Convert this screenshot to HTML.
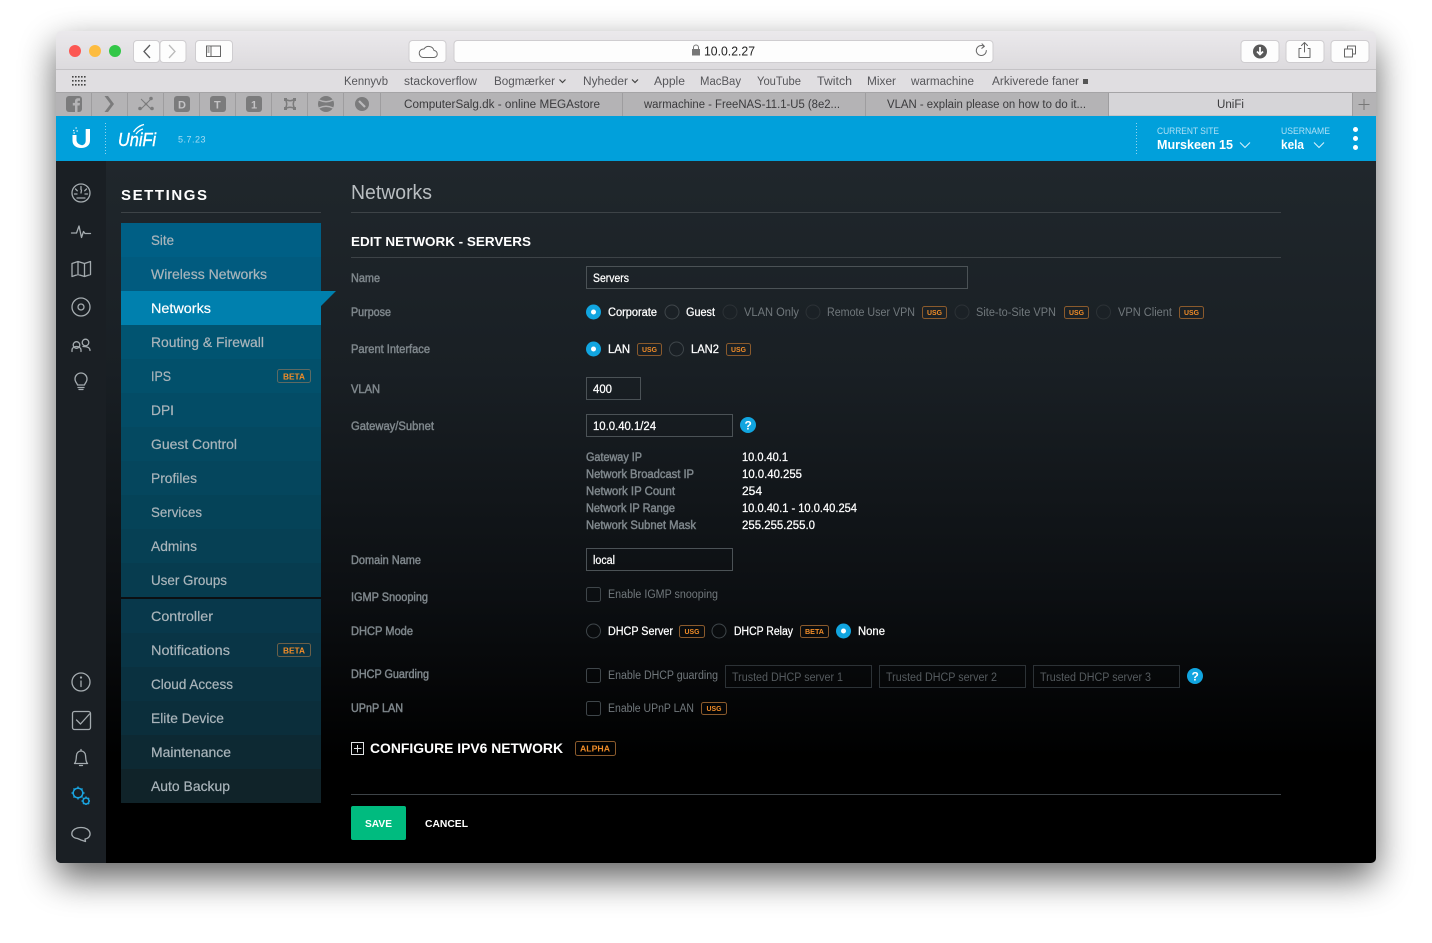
<!DOCTYPE html>
<html><head><meta charset="utf-8"><title>UniFi</title>
<style>
html,body{margin:0;padding:0;width:1432px;height:943px;background:#fff;overflow:hidden}
svg{position:absolute;left:0;top:0;display:block}
text{font-family:"Liberation Sans",sans-serif;white-space:pre}
.bm{font-size:11.5px;fill:#56565a}
.tb{font-size:11.5px;fill:#3a3a3c}
.mn{font-size:14px;fill:#aab5bb;stroke:#aab5bb;stroke-width:.2}
.lb{font-size:11.5px;fill:#7f878c;stroke:#7f878c;stroke-width:.45}
.wt{font-size:11.5px;fill:#fff;stroke:#fff;stroke-width:.25}
.dm{font-size:11.5px;fill:#71787c}
.ph{font-size:11.5px;fill:#555b5f}
.bd{font-size:7.5px;font-weight:bold;fill:#f08c28}
.usg{fill:none;stroke:#8a5a2c;stroke-width:1}
.inp{fill:none;stroke:#4b5256;stroke-width:1}
.ic{fill:none;stroke:#a4abaf;stroke-width:1.3;stroke-linecap:round;stroke-linejoin:round}
.rd{fill:none;stroke:#3f464a;stroke-width:1}
.rdd{fill:none;stroke:#2c3236;stroke-width:1}
.tbi{fill:none;stroke:#666;stroke-width:1;stroke-linecap:round;stroke-linejoin:round}
.btn{fill:#fdfdfd;stroke:#cfcdd0;stroke-width:1}
.ti{fill:#7b7b7c}
</style></head>
<body>
<svg width="1432" height="943" viewBox="0 0 1432 943" xmlns="http://www.w3.org/2000/svg">
<defs>
<filter id="sh" x="-10%" y="-10%" width="120%" height="125%"><feGaussianBlur stdDeviation="18"/></filter>
<linearGradient id="chrome" x1="0" y1="0" x2="0" y2="1"><stop offset="0" stop-color="#ebe9ec"/><stop offset="1" stop-color="#dcdadd"/></linearGradient>
<linearGradient id="bg" x1="0" y1="0" x2="0" y2="1"><stop offset="0" stop-color="#20272c"/><stop offset=".3" stop-color="#191f24"/><stop offset=".62" stop-color="#0c0f12"/><stop offset=".85" stop-color="#000"/><stop offset="1" stop-color="#000"/></linearGradient>
<clipPath id="win"><rect x="56" y="31" width="1320" height="832" rx="5"/></clipPath>
</defs>

<rect x="56" y="46" width="1320" height="832" rx="6" fill="#000" opacity=".62" filter="url(#sh)"/>
<g clip-path="url(#win)">
<rect x="56" y="31" width="1320" height="39" fill="url(#chrome)"/>
<rect x="56" y="69" width="1320" height="1" fill="#c4c2c5"/>
<rect x="56" y="70" width="1320" height="22" fill="#e0dee1"/>
<rect x="56" y="92" width="1320" height="24" fill="#b4b3b5"/>
<rect x="56" y="92" width="1320" height="1" fill="#a5a4a6"/>
<rect x="1109" y="93" width="243" height="22.5" fill="#d6d5d8"/>
<rect x="56" y="116" width="1320" height="45" fill="#01a0db"/>
<rect x="56" y="161" width="1320" height="702" fill="url(#bg)"/>
<rect x="56" y="161" width="50" height="702" fill="#1a1f24"/>
</g>

<!-- traffic lights -->
<circle cx="75" cy="51" r="6" fill="#fc5753"/><circle cx="95" cy="51" r="6" fill="#fdbc40"/><circle cx="115" cy="51" r="6" fill="#33c748"/>
<!-- toolbar buttons -->
<rect class="btn" x="133.5" y="40.5" width="26" height="22" rx="3.5"/><rect class="btn" x="160" y="40.5" width="26" height="22" rx="3.5"/>
<path d="M150 45l-6 6.500 6 6.500" fill="none" stroke="#5b5b5d" stroke-width="1.300"/>
<path d="M169 45l6 6.500-6 6.500" fill="none" stroke="#bbb" stroke-width="1.300"/>
<rect class="btn" x="195.500" y="40.500" width="37" height="22" rx="3.500"/>
<rect x="206.500" y="46" width="14" height="10.500" fill="none" stroke="#666"/><path d="M211 46v10.500M207.500 48h2M207.500 50h2M207.500 52h2" stroke="#666" stroke-width="1" fill="none"/>
<rect class="btn" x="409" y="40.500" width="37" height="22" rx="3.500"/>
<path d="M423 57.500h10.500a3.500 3.500 0 0 0 .5-7 5.500 5.500 0 0 0-10-1.500 4 4 0 0 0-1 8.500z" class="tbi"/>
<rect class="btn" x="454" y="40.500" width="539" height="22" rx="3.500"/>
<path d="M693.500 49v-1.500a2.500 2.500 0 0 1 5 0v1.500" fill="none" stroke="#777" stroke-width="1"/><rect x="692" y="49" width="8" height="6.500" fill="#777"/>
<text x="704" y="55.500" font-size="12.500" fill="#222" textLength="51" lengthAdjust="spacingAndGlyphs">10.0.2.27</text>
<path d="M986.300 50.500a5 5 0 1 1-2.300-4.200" class="tbi"/><path d="M982 43.800l2.400 2.500-2.600 2" class="tbi"/>
<rect class="btn" x="1241" y="40.500" width="38" height="22" rx="3.500"/>
<circle cx="1260" cy="51.500" r="7" fill="#585858"/><path d="M1260 47v6M1257 51.500l3 3 3-3" fill="none" stroke="#fff" stroke-width="1.800"/>
<rect class="btn" x="1286" y="40.500" width="38" height="22" rx="3.500"/>
<path d="M1301 48.500h-2v9h11v-9h-2M1304.500 52v-9M1301.500 45.500l3-3 3 3" class="tbi"/>
<rect class="btn" x="1331" y="40.500" width="38" height="22" rx="3.500"/>
<rect x="1344.500" y="49" width="8" height="8" class="tbi"/><path d="M1347.500 49v-3h8v8h-3" class="tbi"/>

<!-- bookmarks -->
<g fill="#444"><rect x="72" y="76" width="1.600" height="1.600"/><rect x="75" y="76" width="1.600" height="1.600"/><rect x="78" y="76" width="1.600" height="1.600"/><rect x="81" y="76" width="1.600" height="1.600"/><rect x="84" y="76" width="1.600" height="1.600"/>
<rect x="72" y="80" width="1.600" height="1.600"/><rect x="75" y="80" width="1.600" height="1.600"/><rect x="78" y="80" width="1.600" height="1.600"/><rect x="81" y="80" width="1.600" height="1.600"/><rect x="84" y="80" width="1.600" height="1.600"/>
<rect x="72" y="84" width="1.600" height="1.600"/><rect x="75" y="84" width="1.600" height="1.600"/><rect x="78" y="84" width="1.600" height="1.600"/><rect x="81" y="84" width="1.600" height="1.600"/><rect x="84" y="84" width="1.600" height="1.600"/></g>
<text class="bm" x="344" y="85" textLength="44" lengthAdjust="spacingAndGlyphs">Kennyvb</text>
<text class="bm" x="404" y="85" textLength="73" lengthAdjust="spacingAndGlyphs">stackoverflow</text>
<text class="bm" x="494" y="85" textLength="61" lengthAdjust="spacingAndGlyphs">Bogmærker</text>
<path d="M559.500 79.500l3 3 3-3" fill="none" stroke="#444" stroke-width="1.200"/>
<text class="bm" x="583" y="85" textLength="45" lengthAdjust="spacingAndGlyphs">Nyheder</text>
<path d="M632 79.500l3 3 3-3" fill="none" stroke="#444" stroke-width="1.200"/>
<text class="bm" x="654" y="85" textLength="31" lengthAdjust="spacingAndGlyphs">Apple</text>
<text class="bm" x="700" y="85" textLength="41" lengthAdjust="spacingAndGlyphs">MacBay</text>
<text class="bm" x="757" y="85" textLength="44" lengthAdjust="spacingAndGlyphs">YouTube</text>
<text class="bm" x="817" y="85" textLength="35" lengthAdjust="spacingAndGlyphs">Twitch</text>
<text class="bm" x="867" y="85" textLength="29" lengthAdjust="spacingAndGlyphs">Mixer</text>
<text class="bm" x="911" y="85" textLength="63" lengthAdjust="spacingAndGlyphs">warmachine</text>
<text class="bm" x="992" y="85" textLength="87" lengthAdjust="spacingAndGlyphs">Arkiverede faner</text>
<rect x="1083" y="79" width="5" height="5" fill="#555"/>

<!-- tabs -->
<path d="M91.500 93v23M127.500 93v23M163.500 93v23M199.500 93v23M235.500 93v23M271.500 93v23M307.500 93v23M343.500 93v23M380.500 93v23M622.500 93v23M865.500 93v23M1108.500 93v23M1352.500 93v23" stroke="#9e9d9f" fill="none"/>
<rect class="ti" x="66" y="96" width="16" height="16" rx="3"/><path d="M75 112v-6.500h-2.200v-2.600h2.200v-1.700c0-2 1.300-2.900 3-2.900h2v2.500h-1.300c-.8 0-1.200.3-1.200 1.100v1h2.500l-.4 2.600h-2.100v6.500z" fill="#b4b3b5"/>
<path d="M104.500 96l6 8-6 8h3.500l6-8-6-8z" fill="#7b7b7c"/>
<path d="M141 99l5 5 5-5M146 104l-5 5M146 104l5 5" stroke="#7b7b7c" fill="none"/><g fill="#7b7b7c"><circle cx="140" cy="108.500" r="1.800"/><circle cx="152" cy="108.500" r="1.800"/><circle cx="151" cy="98.500" r="1.800"/><circle cx="146" cy="104" r="1.300"/></g>
<rect class="ti" x="174" y="96" width="16" height="16" rx="3"/><text x="178" y="108.500" font-size="11" font-weight="bold" fill="#c4c3c5">D</text>
<rect class="ti" x="210" y="96" width="16" height="16" rx="3"/><text x="214" y="108.500" font-size="11" font-weight="bold" fill="#c4c3c5">T</text>
<rect class="ti" x="246" y="96" width="16" height="16" rx="3"/><text x="251" y="108.500" font-size="11" font-weight="bold" fill="#c4c3c5">1</text>
<path d="M285 99q5 3.500 10 0q-3.500 5 0 10q-5-3.500-10 0q3.500-5 0-10z" fill="none" stroke="#7b7b7c" stroke-width="1.500"/><g fill="#7b7b7c"><rect x="284" y="98" width="3" height="3"/><rect x="293" y="98" width="3" height="3"/><rect x="284" y="107" width="3" height="3"/><rect x="293" y="107" width="3" height="3"/></g>
<circle cx="326" cy="104" r="8" fill="#7b7b7c"/><path d="M319 100q7 3.500 14 0M319 108q7-3.500 14 0" stroke="#b4b3b5" stroke-width="1.500" fill="none"/>
<circle cx="362" cy="104" r="7" fill="#7b7b7c"/><path d="M359 101l6 6" stroke="#bcbbbd" stroke-width="2.200"/>
<text class="tb" x="404" y="108" textLength="196" lengthAdjust="spacingAndGlyphs">ComputerSalg.dk - online MEGAstore</text>
<text class="tb" x="644" y="108" textLength="196" lengthAdjust="spacingAndGlyphs">warmachine - FreeNAS-11.1-U5 (8e2...</text>
<text class="tb" x="887" y="108" textLength="199" lengthAdjust="spacingAndGlyphs">VLAN - explain please on how to do it...</text>
<text class="tb" x="1217" y="108" textLength="27" lengthAdjust="spacingAndGlyphs">UniFi</text>
<path d="M1364 99v11M1358.500 104.500h11" stroke="#777" fill="none"/>

<!-- blue header -->
<path d="M72.500 135v5.500c0 4.800 3.500 7.500 8.700 7.500s8.800-2.700 8.800-7.500V129h-4.300v11.500c0 2.600-1.300 4.300-3.500 4.700-3-.4-5.200-2-5.700-4.700v-5.500z" fill="#fff"/>
<path d="M73 130.500h1.300M75.500 128h1.200M73.500 133h1.300M76.500 131h1.300" stroke="#fff" stroke-width="1.300" fill="none"/>
<path d="M105.500 123v31" stroke="#8fd3ee" stroke-width="1" stroke-dasharray="1 2" fill="none"/>
<text x="118" y="146" font-size="18.500" font-style="italic" fill="#fff" stroke="#fff" stroke-width=".4" textLength="38" lengthAdjust="spacingAndGlyphs">UniFi</text>
<path d="M133.500 132q4-6 10.500-7.500M136 134q3-4 7-5" stroke="#fff" stroke-width="1.300" fill="none"/>
<text x="178" y="142.500" font-size="9.500" letter-spacing=".5" fill="#a8dcf3" textLength="28" lengthAdjust="spacingAndGlyphs">5.7.23</text>
<path d="M1136.500 123v31" stroke="#8fd3ee" stroke-width="1" stroke-dasharray="1 2" fill="none"/>
<text x="1157" y="134" font-size="9.500" fill="#b0e0f5" textLength="62" lengthAdjust="spacingAndGlyphs">CURRENT SITE</text>
<text x="1157" y="149" font-size="12.500" font-weight="bold" fill="#fff" textLength="76" lengthAdjust="spacingAndGlyphs">Murskeen 15</text>
<path d="M1240 142.500l5 5 5-5" fill="none" stroke="#d5f0fb" stroke-width="1.100"/>
<text x="1281" y="134" font-size="9.500" fill="#b0e0f5" textLength="49" lengthAdjust="spacingAndGlyphs">USERNAME</text>
<text x="1281" y="149" font-size="12.500" font-weight="bold" fill="#fff" textLength="23" lengthAdjust="spacingAndGlyphs">kela</text>
<path d="M1314 142.500l5 5 5-5" fill="none" stroke="#d5f0fb" stroke-width="1.100"/>
<circle cx="1355.500" cy="129.500" r="2.500" fill="#fff"/><circle cx="1355.500" cy="138.500" r="2.500" fill="#fff"/><circle cx="1355.500" cy="147.500" r="2.500" fill="#fff"/>

<!-- left rail icons -->
<g class="ic">
<circle cx="81" cy="193" r="9"/><path d="M81 186.500v3M75.500 189l1.800 1.800M86.500 189l-1.800 1.800M74.500 194h2.500M85 194h2.500M81 193l.5-3M77 198h8"/>
<path d="M71.500 233h5l2.500-7 2.500 11.500 2-6 1.500 2h5.500"/>
<path d="M72 263.500l6-2 6.500 2 6-2v13l-6 2-6.500-2-6 2zM78 261.500v13M84.500 263.500v13"/>
<circle cx="81" cy="307" r="9"/><circle cx="81" cy="307" r="3"/>
<circle cx="76.500" cy="345" r="3.300"/><circle cx="85.500" cy="342.500" r="3.300"/><path d="M72 351.500v-1.500a4.500 3.500 0 0 1 9 0v1.500M83 346.500c4 0 7 1 7 4"/>
<path d="M77.500 385c-.5-2-2.500-3-2.500-6a6 6 0 0 1 12 0c0 3-2 4-2.500 6zM78 387.500h6M79 389.500h4"/>
<circle cx="81" cy="682" r="9"/><path d="M81 681v5.500"/><circle cx="81" cy="677.500" r=".5"/>
<rect x="72.500" y="711.500" width="18" height="18" rx="2"/><path d="M76.500 720l4 4 9-10"/>
<path d="M74.500 763.500c2-2 1.500-4.500 2-8a4.500 4.500 0 0 1 9 0c.5 3.500 0 6 2 8zM79.500 765.500h3M81 749.500v1.500"/>
<path d="M81 840l-3.500-1.500c-9-1-7-11 3.500-11s12 10 4 11.500l.5 2.500z"/>
</g>
<g fill="none" stroke="#19a4e0" stroke-width="1.500">
<circle cx="78" cy="793" r="4.800"/><circle cx="86" cy="801" r="3"/>
<path d="M78 786.500v1.500M78 798v1.500M71.500 793h1.500M83 793h1.500M73.500 788.500l1 1M81.500 796.500l1 1M73.500 797.500l1-1M81.500 789.500l1-1M86 796.500v1M86 804v1M81.500 801h1M89 801h1M83 798l.8.8M88.300 803.300l.8.800M83 804l.8-.8M88.300 798.700l.8-.8" stroke-width="1.400"/>
</g>

<!-- settings menu -->
<text x="121" y="200" font-size="15" font-weight="bold" fill="#fff" textLength="86" lengthAdjust="spacing">SETTINGS</text>
<rect x="121" y="212" width="200" height="1" fill="#3d4347"/>
<rect x="121" y="223" width="200" height="34" fill="#005f85"/>
<rect x="121" y="257" width="200" height="34" fill="#015b7f"/>
<rect x="121" y="291" width="200" height="34" fill="#0080ae"/>
<path d="M321 291h15l-15 15z" fill="#0080ae"/>
<rect x="121" y="325" width="200" height="34" fill="#015471"/>
<rect x="121" y="359" width="200" height="34" fill="#02506b"/>
<rect x="121" y="393" width="200" height="34" fill="#034c66"/>
<rect x="121" y="427" width="200" height="34" fill="#044961"/>
<rect x="121" y="461" width="200" height="34" fill="#05465d"/>
<rect x="121" y="495" width="200" height="34" fill="#054358"/>
<rect x="121" y="529" width="200" height="34" fill="#064054"/>
<rect x="121" y="563" width="200" height="34" fill="#073c4f"/>
<rect x="121" y="599" width="200" height="34" fill="#08384b"/>
<rect x="121" y="633" width="200" height="34" fill="#093546"/>
<rect x="121" y="667" width="200" height="34" fill="#0a3140"/>
<rect x="121" y="701" width="200" height="34" fill="#0b2e3b"/>
<rect x="121" y="735" width="200" height="34" fill="#0d2933"/>
<rect x="121" y="769" width="200" height="34" fill="#102329"/>
<text class="mn" x="151" y="245" textLength="23" lengthAdjust="spacingAndGlyphs">Site</text>
<text class="mn" x="151" y="279" textLength="116" lengthAdjust="spacingAndGlyphs">Wireless Networks</text>
<text class="mn" x="151" y="313" style="fill:#fff;stroke:#fff" textLength="60" lengthAdjust="spacingAndGlyphs">Networks</text>
<text class="mn" x="151" y="347" textLength="113" lengthAdjust="spacingAndGlyphs">Routing &amp; Firewall</text>
<text class="mn" x="151" y="381" textLength="20" lengthAdjust="spacingAndGlyphs">IPS</text>
<text class="mn" x="151" y="415" textLength="23" lengthAdjust="spacingAndGlyphs">DPI</text>
<text class="mn" x="151" y="449" textLength="86" lengthAdjust="spacingAndGlyphs">Guest Control</text>
<text class="mn" x="151" y="483" textLength="46" lengthAdjust="spacingAndGlyphs">Profiles</text>
<text class="mn" x="151" y="517" textLength="51" lengthAdjust="spacingAndGlyphs">Services</text>
<text class="mn" x="151" y="551" textLength="46" lengthAdjust="spacingAndGlyphs">Admins</text>
<text class="mn" x="151" y="585" textLength="76" lengthAdjust="spacingAndGlyphs">User Groups</text>
<text class="mn" x="151" y="621" textLength="62" lengthAdjust="spacingAndGlyphs">Controller</text>
<text class="mn" x="151" y="655" textLength="79" lengthAdjust="spacingAndGlyphs">Notifications</text>
<text class="mn" x="151" y="689" textLength="82" lengthAdjust="spacingAndGlyphs">Cloud Access</text>
<text class="mn" x="151" y="723" textLength="73" lengthAdjust="spacingAndGlyphs">Elite Device</text>
<text class="mn" x="151" y="757" textLength="80" lengthAdjust="spacingAndGlyphs">Maintenance</text>
<text class="mn" x="151" y="791" textLength="79" lengthAdjust="spacingAndGlyphs">Auto Backup</text>
<rect x="277.500" y="369.500" width="33" height="13" rx="2" fill="none" stroke="#5e6a63"/>
<text x="283" y="379.500" font-size="8.500" font-weight="bold" fill="#f08c28" textLength="22" lengthAdjust="spacingAndGlyphs">BETA</text>
<rect x="277.500" y="643.500" width="33" height="13" rx="2" fill="none" stroke="#6b5f48"/>
<text x="283" y="653.500" font-size="8.500" font-weight="bold" fill="#f08c28" textLength="22" lengthAdjust="spacingAndGlyphs">BETA</text>

<!-- main -->
<text x="351" y="199" font-size="20" fill="#b9bec1" textLength="81" lengthAdjust="spacingAndGlyphs">Networks</text>
<rect x="351" y="212" width="930" height="1" fill="#3d4347"/>
<text x="351" y="246" font-size="13" font-weight="bold" fill="#fff" textLength="180" lengthAdjust="spacingAndGlyphs">EDIT NETWORK - SERVERS</text>
<rect x="351" y="257" width="930" height="1" fill="#3d4347"/>

<text class="lb" x="351" y="282" textLength="29" lengthAdjust="spacingAndGlyphs">Name</text>
<text class="lb" x="351" y="316" textLength="40" lengthAdjust="spacingAndGlyphs">Purpose</text>
<text class="lb" x="351" y="353" textLength="79" lengthAdjust="spacingAndGlyphs">Parent Interface</text>
<text class="lb" x="351" y="393" textLength="29" lengthAdjust="spacingAndGlyphs">VLAN</text>
<text class="lb" x="351" y="430" textLength="83" lengthAdjust="spacingAndGlyphs">Gateway/Subnet</text>
<text class="lb" x="351" y="564" textLength="70" lengthAdjust="spacingAndGlyphs">Domain Name</text>
<text class="lb" x="351" y="601" textLength="77" lengthAdjust="spacingAndGlyphs">IGMP Snooping</text>
<text class="lb" x="351" y="635" textLength="62" lengthAdjust="spacingAndGlyphs">DHCP Mode</text>
<text class="lb" x="351" y="678" textLength="78" lengthAdjust="spacingAndGlyphs">DHCP Guarding</text>
<text class="lb" x="351" y="712" textLength="52" lengthAdjust="spacingAndGlyphs">UPnP LAN</text>

<!-- inputs -->
<rect class="inp" x="586.500" y="266.500" width="381" height="22"/>
<text class="wt" x="593" y="282" textLength="36" lengthAdjust="spacingAndGlyphs">Servers</text>
<rect class="inp" x="586.500" y="377.500" width="54" height="22"/>
<text class="wt" x="593" y="393" textLength="19" lengthAdjust="spacingAndGlyphs">400</text>
<rect class="inp" x="586.500" y="414.500" width="146" height="22"/>
<text class="wt" x="593" y="430" textLength="63" lengthAdjust="spacingAndGlyphs">10.0.40.1/24</text>
<rect class="inp" x="586.500" y="548.500" width="146" height="22"/>
<text class="wt" x="593" y="564" textLength="22" lengthAdjust="spacingAndGlyphs">local</text>

<!-- purpose -->
<circle cx="593.500" cy="312" r="7.500" fill="#11a5e0"/><circle cx="593.500" cy="312" r="2.500" fill="#fff"/>
<text class="wt" x="608" y="316" textLength="49" lengthAdjust="spacingAndGlyphs">Corporate</text>
<circle class="rd" cx="672" cy="312" r="7"/>
<text class="wt" x="686" y="316" textLength="29" lengthAdjust="spacingAndGlyphs">Guest</text>
<circle class="rdd" cx="730" cy="312" r="7"/>
<text class="dm" x="744" y="316" textLength="55" lengthAdjust="spacingAndGlyphs">VLAN Only</text>
<circle class="rdd" cx="813" cy="312" r="7"/>
<text class="dm" x="827" y="316" textLength="88" lengthAdjust="spacingAndGlyphs">Remote User VPN</text>
<rect class="usg" x="922.500" y="306.500" width="24" height="12" rx="2"/><text class="bd" x="927" y="315" textLength="15" lengthAdjust="spacingAndGlyphs">USG</text>
<circle class="rdd" cx="962" cy="312" r="7"/>
<text class="dm" x="976" y="316" textLength="80" lengthAdjust="spacingAndGlyphs">Site-to-Site VPN</text>
<rect class="usg" x="1064.500" y="306.500" width="24" height="12" rx="2"/><text class="bd" x="1069" y="315" textLength="15" lengthAdjust="spacingAndGlyphs">USG</text>
<circle class="rdd" cx="1103.500" cy="312" r="7"/>
<text class="dm" x="1118" y="316" textLength="54" lengthAdjust="spacingAndGlyphs">VPN Client</text>
<rect class="usg" x="1179.500" y="306.500" width="24" height="12" rx="2"/><text class="bd" x="1184" y="315" textLength="15" lengthAdjust="spacingAndGlyphs">USG</text>

<!-- parent interface -->
<circle cx="593.500" cy="349" r="7.500" fill="#11a5e0"/><circle cx="593.500" cy="349" r="2.500" fill="#fff"/>
<text class="wt" x="608" y="353" textLength="22" lengthAdjust="spacingAndGlyphs">LAN</text>
<rect class="usg" x="637.500" y="343.500" width="24" height="12" rx="2"/><text class="bd" x="642" y="352" textLength="15" lengthAdjust="spacingAndGlyphs">USG</text>
<circle class="rd" cx="676.500" cy="349" r="7"/>
<text class="wt" x="691" y="353" textLength="28" lengthAdjust="spacingAndGlyphs">LAN2</text>
<rect class="usg" x="726.500" y="343.500" width="24" height="12" rx="2"/><text class="bd" x="731" y="352" textLength="15" lengthAdjust="spacingAndGlyphs">USG</text>

<!-- help -->
<circle cx="748" cy="425" r="8" fill="#11a5e0"/><text x="744.500" y="429.500" font-size="12" font-weight="bold" fill="#fff">?</text>

<!-- info -->
<text class="lb" x="586" y="461" textLength="56" lengthAdjust="spacingAndGlyphs">Gateway IP</text>
<text class="lb" x="586" y="478" textLength="108" lengthAdjust="spacingAndGlyphs">Network Broadcast IP</text>
<text class="lb" x="586" y="495" textLength="89" lengthAdjust="spacingAndGlyphs">Network IP Count</text>
<text class="lb" x="586" y="512" textLength="89" lengthAdjust="spacingAndGlyphs">Network IP Range</text>
<text class="lb" x="586" y="529" textLength="110" lengthAdjust="spacingAndGlyphs">Network Subnet Mask</text>
<text class="wt" x="742" y="461" textLength="46" lengthAdjust="spacingAndGlyphs">10.0.40.1</text>
<text class="wt" x="742" y="478" textLength="60" lengthAdjust="spacingAndGlyphs">10.0.40.255</text>
<text class="wt" x="742" y="495" textLength="20" lengthAdjust="spacingAndGlyphs">254</text>
<text class="wt" x="742" y="512" textLength="115" lengthAdjust="spacingAndGlyphs">10.0.40.1 - 10.0.40.254</text>
<text class="wt" x="742" y="529" textLength="73" lengthAdjust="spacingAndGlyphs">255.255.255.0</text>

<!-- IGMP -->
<rect class="rd" x="586.500" y="587.500" width="14" height="14" rx="2"/>
<text class="dm" x="608" y="598" textLength="110" lengthAdjust="spacingAndGlyphs">Enable IGMP snooping</text>

<!-- DHCP mode -->
<circle class="rd" cx="593.500" cy="631" r="7"/>
<text class="wt" x="608" y="635" textLength="65" lengthAdjust="spacingAndGlyphs">DHCP Server</text>
<rect class="usg" x="679.500" y="625.500" width="25" height="12" rx="2"/><text class="bd" x="684.500" y="634" textLength="15" lengthAdjust="spacingAndGlyphs">USG</text>
<circle class="rd" cx="719" cy="631" r="7"/>
<text class="wt" x="734" y="635" textLength="59" lengthAdjust="spacingAndGlyphs">DHCP Relay</text>
<rect class="usg" x="800.500" y="625.500" width="28" height="12" rx="2"/><text class="bd" x="805" y="634" textLength="19" lengthAdjust="spacingAndGlyphs">BETA</text>
<circle cx="843.500" cy="631" r="7.500" fill="#11a5e0"/><circle cx="843.500" cy="631" r="2.500" fill="#fff"/>
<text class="wt" x="858" y="635" textLength="27" lengthAdjust="spacingAndGlyphs">None</text>

<!-- DHCP guarding -->
<rect class="rd" x="586.500" y="668.500" width="14" height="14" rx="2"/>
<text class="dm" x="608" y="679" textLength="110" lengthAdjust="spacingAndGlyphs">Enable DHCP guarding</text>
<rect x="725.500" y="665.500" width="146" height="22" fill="none" stroke="#2c3236"/>
<text class="ph" x="732" y="681" textLength="111" lengthAdjust="spacingAndGlyphs">Trusted DHCP server 1</text>
<rect x="879.500" y="665.500" width="146" height="22" fill="none" stroke="#2c3236"/>
<text class="ph" x="886" y="681" textLength="111" lengthAdjust="spacingAndGlyphs">Trusted DHCP server 2</text>
<rect x="1033.500" y="665.500" width="146" height="22" fill="none" stroke="#2c3236"/>
<text class="ph" x="1040" y="681" textLength="111" lengthAdjust="spacingAndGlyphs">Trusted DHCP server 3</text>
<circle cx="1195" cy="676" r="8" fill="#11a5e0"/><text x="1191.500" y="680.500" font-size="12" font-weight="bold" fill="#fff">?</text>

<!-- UPnP -->
<rect class="rd" x="586.500" y="701.500" width="14" height="14" rx="2"/>
<text class="dm" x="608" y="712" textLength="86" lengthAdjust="spacingAndGlyphs">Enable UPnP LAN</text>
<rect class="usg" x="701.500" y="702.500" width="25" height="12" rx="2"/><text class="bd" x="706.500" y="711" textLength="15" lengthAdjust="spacingAndGlyphs">USG</text>

<!-- ipv6 -->
<rect x="351.500" y="742.500" width="12" height="12" fill="none" stroke="#dfe2e4"/><path d="M357.500 745v7.500M354 748.500h7.500" stroke="#dfe2e4" fill="none"/>
<text x="370" y="753" font-size="13.500" font-weight="bold" fill="#fff" textLength="193" lengthAdjust="spacingAndGlyphs">CONFIGURE IPV6 NETWORK</text>
<rect class="usg" x="575.500" y="741.500" width="40" height="14" rx="2"/><text x="580" y="751.500" font-size="8.500" font-weight="bold" fill="#f08c28" textLength="30" lengthAdjust="spacingAndGlyphs">ALPHA</text>

<!-- footer -->
<rect x="351" y="794" width="930" height="1" fill="#3d4347"/>
<rect x="351" y="806" width="55" height="34" rx="2" fill="#00bb7f"/>
<text x="365" y="827" font-size="10" font-weight="bold" fill="#fff" textLength="27" lengthAdjust="spacingAndGlyphs">SAVE</text>
<text x="425" y="827" font-size="10" font-weight="bold" fill="#fff" textLength="43" lengthAdjust="spacingAndGlyphs">CANCEL</text>
</svg>
</body></html>
